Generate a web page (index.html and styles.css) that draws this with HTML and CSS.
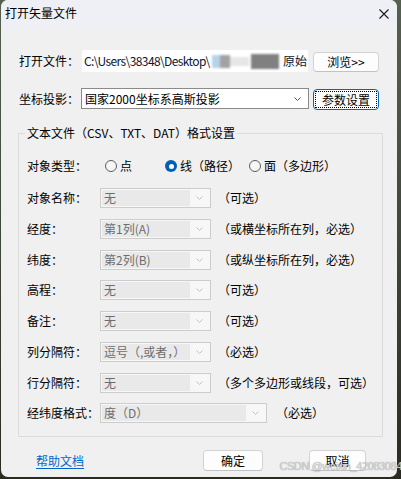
FILE: index.html
```html
<!DOCTYPE html>
<html lang="zh-CN">
<head>
<meta charset="utf-8">
<title>打开矢量文件</title>
<link rel="stylesheet" href="styles.css">
</head>
<body>
<div class="screen">
  <div class="window">
    <div class="titlebar">
      <span class="title">打开矢量文件</span>
      <svg class="close" width="10" height="10" viewBox="0 0 10 10"><path d="M0.5 0.5L9.5 9.5M9.5 0.5L0.5 9.5" stroke="#1b1b1b" stroke-width="1.1" fill="none"/></svg>
    </div>
    <div class="content">
      <div class="top-row r1">
        <span class="lbl-top">打开文件：</span>
        <div class="textbox">
          <span class="path">C:\Users\38348\Desktop\</span>
          <span class="blur"><i class="b1"></i><i class="b2"></i><i class="b3"></i><i class="b4"></i></span>
          <span class="tail">原始</span>
        </div>
        <div class="btn browse">浏览&gt;&gt;</div>
      </div>
      <div class="top-row r2">
        <span class="lbl-top">坐标投影：</span>
        <div class="combo">
          <span class="ctext">国家2000坐标系高斯投影</span>
          <svg class="chev" width="7" height="4" viewBox="0 0 7 4"><polyline points="0.5,0.5 3.5,3.5 6.5,0.5" fill="none" stroke="#5c5c5c" stroke-width="1"/></svg>
        </div>
        <div class="btn param"><span class="focus">参数设置</span></div>
      </div>

      <fieldset class="group">
        <legend>文本文件（CSV、TXT、DAT）格式设置</legend>
        <div class="gbody">
          <div class="grow radios">
            <span class="glbl">对象类型：</span>
            <span class="radio r-a"><span class="circle"></span>点</span>
            <span class="radio r-b"><span class="circle on"></span>线（路径）</span>
            <span class="radio r-c"><span class="circle"></span>面（多边形）</span>
          </div>
          <div class="grow">
            <span class="glbl">对象名称：</span>
            <div class="dcombo"><span class="field">无</span><span class="arr"><svg width="7" height="4" viewBox="0 0 7 4"><polyline points="0.5,0.5 3.5,3.5 6.5,0.5" fill="none" stroke="#c2c2c2" stroke-width="1"/></svg></span></div>
            <span class="note">（可选）</span>
          </div>
          <div class="grow">
            <span class="glbl">经度：</span>
            <div class="dcombo"><span class="field">第1列(A)</span><span class="arr"><svg width="7" height="4" viewBox="0 0 7 4"><polyline points="0.5,0.5 3.5,3.5 6.5,0.5" fill="none" stroke="#c2c2c2" stroke-width="1"/></svg></span></div>
            <span class="note">（或横坐标所在列，必选）</span>
          </div>
          <div class="grow">
            <span class="glbl">纬度：</span>
            <div class="dcombo"><span class="field">第2列(B)</span><span class="arr"><svg width="7" height="4" viewBox="0 0 7 4"><polyline points="0.5,0.5 3.5,3.5 6.5,0.5" fill="none" stroke="#c2c2c2" stroke-width="1"/></svg></span></div>
            <span class="note">（或纵坐标所在列，必选）</span>
          </div>
          <div class="grow">
            <span class="glbl">高程：</span>
            <div class="dcombo"><span class="field">无</span><span class="arr"><svg width="7" height="4" viewBox="0 0 7 4"><polyline points="0.5,0.5 3.5,3.5 6.5,0.5" fill="none" stroke="#c2c2c2" stroke-width="1"/></svg></span></div>
            <span class="note">（可选）</span>
          </div>
          <div class="grow">
            <span class="glbl">备注：</span>
            <div class="dcombo"><span class="field">无</span><span class="arr"><svg width="7" height="4" viewBox="0 0 7 4"><polyline points="0.5,0.5 3.5,3.5 6.5,0.5" fill="none" stroke="#c2c2c2" stroke-width="1"/></svg></span></div>
            <span class="note">（可选）</span>
          </div>
          <div class="grow">
            <span class="glbl">列分隔符：</span>
            <div class="dcombo"><span class="field">逗号（,或者，）</span><span class="arr"><svg width="7" height="4" viewBox="0 0 7 4"><polyline points="0.5,0.5 3.5,3.5 6.5,0.5" fill="none" stroke="#c2c2c2" stroke-width="1"/></svg></span></div>
            <span class="note">（必选）</span>
          </div>
          <div class="grow">
            <span class="glbl">行分隔符：</span>
            <div class="dcombo"><span class="field">无</span><span class="arr"><svg width="7" height="4" viewBox="0 0 7 4"><polyline points="0.5,0.5 3.5,3.5 6.5,0.5" fill="none" stroke="#c2c2c2" stroke-width="1"/></svg></span></div>
            <span class="note">（多个多边形或线段，可选）</span>
          </div>
          <div class="grow">
            <span class="glbl">经纬度格式：</span>
            <div class="dcombo wide"><span class="field">度（D）</span><span class="arr"><svg width="7" height="4" viewBox="0 0 7 4"><polyline points="0.5,0.5 3.5,3.5 6.5,0.5" fill="none" stroke="#c2c2c2" stroke-width="1"/></svg></span></div>
            <span class="note note-wide">（必选）</span>
          </div>
        </div>
      </fieldset>

      <div class="footer">
        <span class="help">帮助文档</span>
        <div class="btn ok">确定</div>
        <div class="btn cancel">取消</div>
      </div>
    </div>
  </div>
  <div class="wm">CSDN @weixin_42083084</div>
</div>
</body>
</html>
```

FILE: styles.css
```css
* { box-sizing: border-box; }
html, body { margin: 0; padding: 0; }
body {
  width: 401px;
  height: 479px;
  overflow: hidden;
  background: #2f3430;
  font-family: "Noto Sans CJK SC", "Noto Sans", sans-serif;
  font-size: 12px;
  color: #000;
}
.screen {
  position: relative;
  width: 401px;
  height: 479px;
  background: linear-gradient(180deg, #56604f 0%, #3d4439 55%, #2b2a20 100%);
  overflow: hidden;
}
.window {
  margin-left: 1px;
  width: 396px;
  height: 477px;
  background: #f0f0f0;
  border-radius: 7px;
  overflow: hidden;
  display: flex;
  flex-direction: column;
}
.titlebar {
  height: 29px;
  flex: none;
  background: #eef0f6;
  display: flex;
  align-items: flex-start;
  padding: 5px 0 0 4px;
  line-height: 16px;
}
.title { flex: 1; }
.close { margin: 3.5px 8px 0 0; flex: none; }

.content {
  flex: 1;
  padding: 0 14px 0 17px;
  display: flex;
  flex-direction: column;
}
.top-row {
  display: flex;
  height: 22px;
  padding-left: 1px;
  line-height: 16px;
}
.r1 { margin-top: 21px; align-items: center; }
.r2 { margin-top: 16px; }
.lbl-top {
  width: 62px;
  flex: none;
  align-self: center;
}
.textbox {
  margin-left: 1px;
  width: 226px;
  height: 22px;
  background: #fff;
  padding: 0 1px 0 2px;
  display: flex;
  align-items: center;
  overflow: hidden;
  white-space: nowrap;
  color: #0c1530;
}
.path { flex: none; letter-spacing: -0.6px; }
.blur {
  flex: 1;
  display: flex;
  align-items: center;
  height: 16px;
  filter: blur(1.3px);
  overflow: visible;
}
.blur i { display: block; height: 13px; }
.blur .b1 { width: 8px; background: #b6d3ea; margin-left: 2px; }
.blur .b2 { width: 10px; background: #a2a2a2; }
.blur .b3 { flex: 1; background: #e6e6e6; height: 9px; }
.blur .b4 { width: 28px; background: #808080; margin: 0 4px 0 2px; height: 15px; }
.tail { flex: none; }

.btn {
  display: flex;
  align-items: center;
  justify-content: center;
  background: #fdfdfd;
  border: 1px solid #d3d3d3;
  border-bottom-color: #c2c2c2;
  border-radius: 4px;
  line-height: 16px;
  flex: none;
}
.browse {
  margin-left: 5px;
  width: 66px;
  height: 20px;
  align-self: flex-end;
}
.combo {
  width: 228px;
  height: 21px;
  border: 1px solid #8a8a8a;
  background: #fff;
  padding: 0 7px 0 3px;
  display: flex;
  align-items: center;
  align-self: flex-start;
}
.ctext { flex: 1; }
.param {
  margin-left: 4px;
  width: 66px;
  height: 21px;
  align-self: flex-end;
  border: 1px solid #0067c0;
  padding: 1px;
}
.param .focus {
  flex: 1;
  align-self: stretch;
  border: 1px dotted #000;
  display: flex;
  align-items: center;
  justify-content: center;
}

.group {
  margin: 15px 0 0 0;
  width: 365px;
  border: 1px solid #dcdcdc;
  padding: 15px 0 13px 0;
  min-width: 0;
}
.group legend {
  margin-left: 6px;
  padding: 0 2px;
  line-height: 16px;
}
.gbody {
  padding-left: 8px;
  display: flex;
  flex-direction: column;
  gap: 10.75px;
}
.grow {
  display: flex;
  align-items: center;
  height: 20px;
  line-height: 16px;
  white-space: nowrap;
}
.radios { margin-bottom: 1.25px; }
.glbl { width: 73px; flex: none; }
.radio {
  display: flex;
  align-items: center;
  gap: 3px;
}
.r-a { margin-left: 5px; }
.r-b { margin-left: 33px; }
.r-c { margin-left: 9px; }
.circle {
  width: 12px;
  height: 12px;
  border-radius: 50%;
  border: 1px solid #5c5c5c;
  background: #f6f6f6;
  flex: none;
}
.circle.on {
  border: none;
  background: #005fb8;
  display: flex;
  align-items: center;
  justify-content: center;
}
.circle.on::after {
  content: "";
  width: 5px;
  height: 5px;
  border-radius: 50%;
  background: #fff;
}
.dcombo {
  width: 111px;
  height: 20px;
  border: 1px solid #cccccc;
  background: #f7f7f7;
  padding: 1px;
  display: flex;
  flex: none;
}
.dcombo.wide { width: 167px; }
.field {
  flex: 1;
  background: #e9e9e9;
  color: #6d6d6d;
  padding-left: 2px;
  line-height: 16px;
  overflow: hidden;
}
.arr {
  width: 19px;
  flex: none;
  display: flex;
  align-items: center;
  justify-content: center;
}
.note { margin-left: 7px; }
.note-wide { margin-left: 9px; }

.footer {
  display: flex;
  align-items: center;
  margin-top: 13px;
  height: 21px;
  line-height: 16px;
}
.help {
  margin-left: 18px;
  color: #0066cc;
  text-decoration: underline;
  text-underline-offset: 2px;
}
.ok {
  margin-left: 119px;
  width: 60px;
  height: 21px;
}
.cancel {
  margin-left: 46px;
  width: 57px;
  height: 21px;
}
.wm {
  position: absolute;
  right: -1px;
  bottom: 6px;
  font-family: "Liberation Sans", Arial, sans-serif;
  font-size: 11px;
  letter-spacing: -0.4px;
  line-height: 14px;
  color: rgba(214, 214, 214, 0.9);
  text-shadow: 0 0 1px rgba(90, 90, 90, 0.6);
  white-space: nowrap;
}
```
